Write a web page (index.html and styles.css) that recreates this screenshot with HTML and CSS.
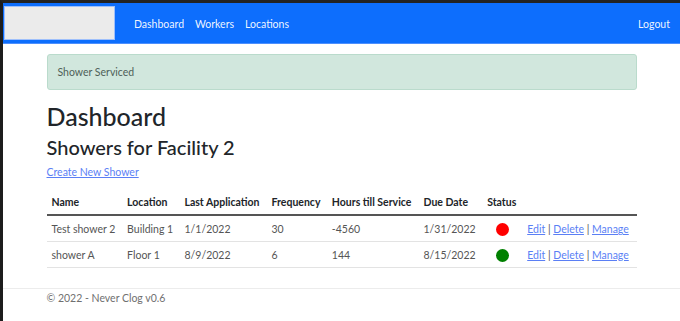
FILE: index.html
```html
<!DOCTYPE html>
<html>

<head>
  <meta charset="utf-8" />
  <title>Dashboard - Never Clog</title>
  <link rel="stylesheet" href="styles.css">
</head>

<body>
  <div class="frame">
    <nav class="navbar">
      <div class="brand"></div>
      <ul class="nav-links">
        <li><a href="#">Dashboard</a></li>
        <li><a href="#">Workers</a></li>
        <li><a href="#">Locations</a></li>
      </ul>
      <a class="logout" href="#">Logout</a>
    </nav>

    <main class="container">
      <div class="alert">Shower Serviced</div>

      <h1>Dashboard</h1>
      <h2>Showers for Facility 2</h2>
      <a class="create-link" href="#">Create New Shower</a>

      <table class="table">
        <thead>
          <tr>
            <th>Name</th>
            <th>Location</th>
            <th>Last Application</th>
            <th>Frequency</th>
            <th>Hours till Service</th>
            <th>Due Date</th>
            <th>Status</th>
            <th></th>
          </tr>
        </thead>
        <tbody>
          <tr>
            <td>Test shower 2</td>
            <td>Building 1</td>
            <td>1/1/2022</td>
            <td>30</td>
            <td>-4560</td>
            <td>1/31/2022</td>
            <td class="status"><span class="dot dot-red"></span></td>
            <td class="actions"><a href="#">Edit</a> | <a href="#">Delete</a> | <a href="#">Manage</a></td>
          </tr>
          <tr>
            <td>shower A</td>
            <td>Floor 1</td>
            <td>8/9/2022</td>
            <td>6</td>
            <td>144</td>
            <td>8/15/2022</td>
            <td class="status"><span class="dot dot-green"></span></td>
            <td class="actions"><a href="#">Edit</a> | <a href="#">Delete</a> | <a href="#">Manage</a></td>
          </tr>
        </tbody>
      </table>
    </main>

    <footer class="footer">
      <div class="container">&copy; 2022 - Never Clog v0.6</div>
    </footer>
  </div>
</body>

</html>
```

FILE: styles.css
```css
html,
body {
  margin: 0;
  padding: 0;
  height: 100%;
}

body {
  font-family: Lato, "Open Sans", sans-serif;
  font-size: 10.5px;
  color: #212529;
  background: #ffffff;
}

.frame {
  min-height: 100%;
  box-sizing: border-box;
  border-top: 3px solid #232323;
  border-left: 3px solid #1c1c1c;
}

.navbar {
  display: flex;
  align-items: center;
  height: 41px;
  padding: 2px 10px 0 1px;
  box-sizing: border-box;
  background-color: #0d6efd;
  border-bottom: 1px solid #4d8ffd;
}

.brand {
  width: 109px;
  height: 32px;
  margin-top: -2px;
  background: #ebebeb;
  border: 1px solid #9fc0fb;
}

.nav-links {
  display: flex;
  gap: 11px;
  list-style: none;
  margin: 0 0 0 19px;
  padding: 0;
}

.nav-links a,
.logout {
  color: rgba(255, 255, 255, 0.94);
  text-decoration: none;
  font-size: 10.5px;
}

.logout {
  margin-left: auto;
}

.container {
  width: 590px;
  margin: 0 auto;
}

.alert {
  margin-top: 10px;
  padding: 11px 10px;
  background-color: #d1e7dd;
  border: 1px solid #badbcc;
  border-radius: 3px;
  color: #4f5f58;
}

h1 {
  margin: 11px 0 0;
  font-size: 25px;
  font-weight: 500;
  line-height: 1.2;
}

h2 {
  margin: 4px 0 7px;
  font-size: 20px;
  font-weight: 500;
  line-height: 1.2;
}

.create-link {
  color: #5b7ff5;
}

.table {
  width: 100%;
  margin-top: 14px;
  border-collapse: collapse;
}

.table th {
  text-align: left;
  font-weight: 700;
  padding: 4px 5px 6px;
  white-space: nowrap;
  border-bottom: 2px solid #555;
}

.table td {
  padding: 6px 5px 5px;
  color: #555;
  white-space: nowrap;
  border-bottom: 1px solid #e3e3e3;
}

.status {
  text-align: center;
}

.dot {
  display: inline-block;
  width: 13px;
  height: 13px;
  border-radius: 50%;
  vertical-align: middle;
}

.dot-red {
  background: #ff0000;
}

.dot-green {
  background: #008000;
}

.actions {
  color: #a89a84;
}

.actions a {
  color: #5b7ff5;
}

.footer {
  margin-top: 20px;
  border-top: 1px solid #ececec;
  padding-top: 3px;
  color: #707070;
}
```
